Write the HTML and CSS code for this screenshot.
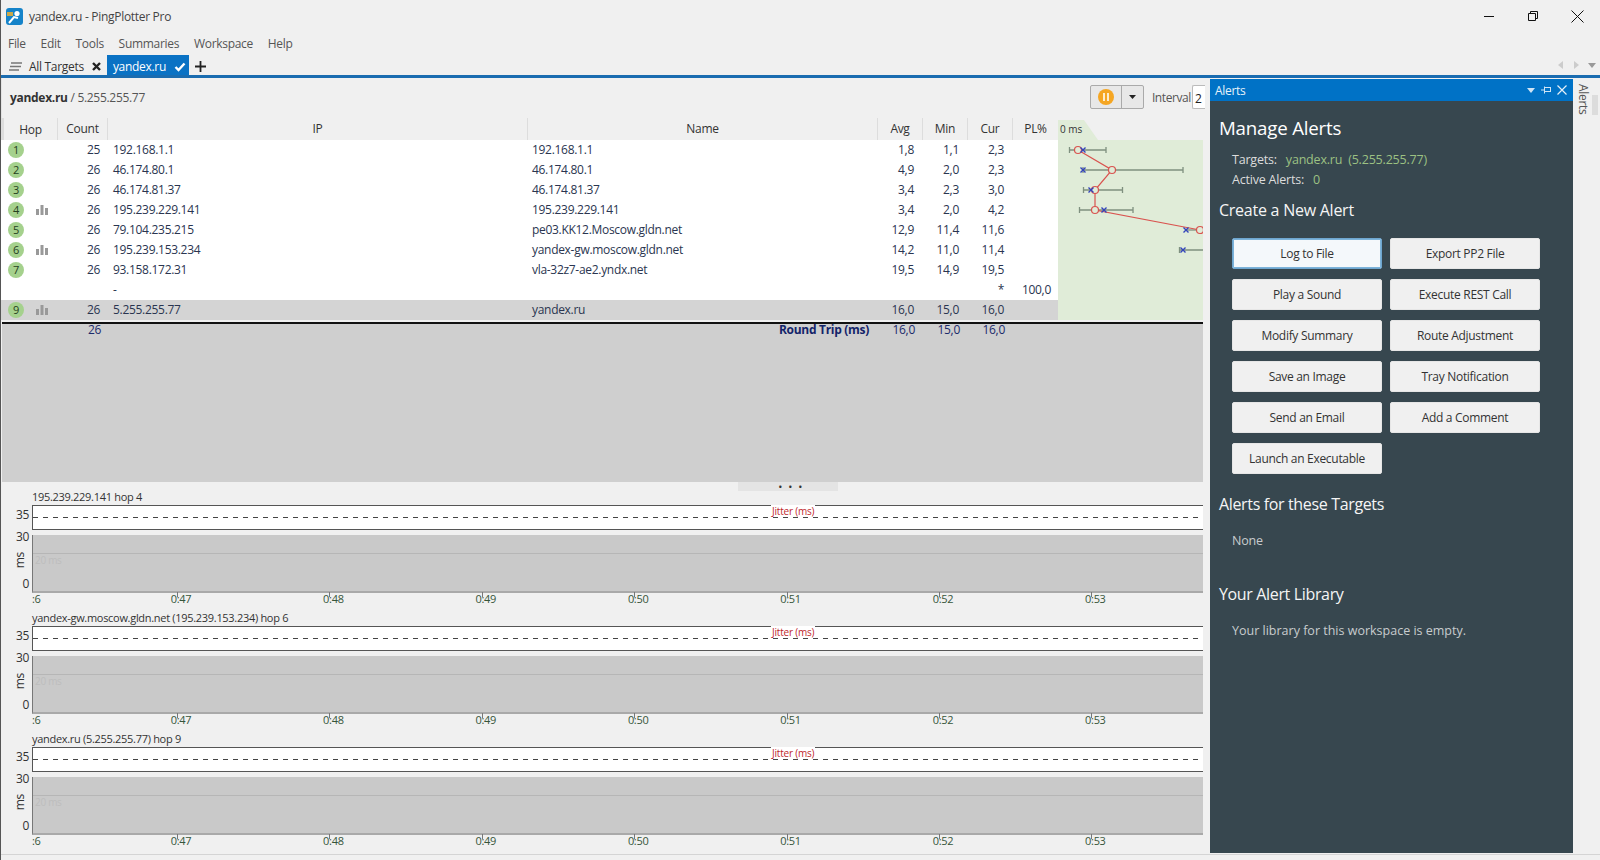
FILE: index.html
```html
<!DOCTYPE html>
<html lang="en">
<head>
<meta charset="utf-8">
<title>yandex.ru - PingPlotter Pro</title>
<link rel="stylesheet" href="styles.css">
</head>
<body>
<div class="app">
  <header class="titlebar">
    <svg class="appicon" width="17" height="17" viewBox="0 0 17 17"><rect width="17" height="17" rx="3" fill="#1583c9"/><rect x="1" y="4" width="6" height="4" fill="#c9a84a"/><circle cx="11" cy="5.5" r="2.6" fill="#fff"/><path d="M3 15 L8 9 L12 10" stroke="#fff" stroke-width="2" fill="none"/></svg>
    <span class="apptitle">yandex.ru - PingPlotter Pro</span>
    <div class="winbtns">
      <svg width="12" height="12" viewBox="0 0 12 12"><path d="M1 6.500H11" stroke="#111" fill="none"/></svg>
      <svg width="12" height="12" viewBox="0 0 12 12"><path d="M1.500 3.500H8.500V10.500H1.500Z M3.500 3.500V1.500H10.500V8.500H8.500" stroke="#111" fill="none"/></svg>
      <svg width="13" height="13" viewBox="0 0 13 13"><path d="M.5 .5L12.500 12.500M12.500 .5L.5 12.500" stroke="#111" fill="none"/></svg>
    </div>
  </header>
  <nav class="menubar"><span>File</span><span>Edit</span><span>Tools</span><span>Summaries</span><span>Workspace</span><span>Help</span></nav>
  <div class="tabbar">
    <svg class="burger" width="13" height="9" viewBox="0 0 13 9"><path d="M2 1H13M1 4.500H12M0 8H10" stroke="#777" stroke-width="1.500" fill="none"/></svg>
    <span class="tab">All Targets</span>
    <svg class="tabx" width="9" height="9" viewBox="0 0 9 9"><path d="M1 1L8 8M8 1L1 8" stroke="#222" stroke-width="2.400" fill="none"/></svg>
    <span class="tab active">yandex.ru
      <svg width="12" height="10" viewBox="0 0 12 10"><path d="M1.500 5L4.500 8L10.500 1.500" stroke="#fff" stroke-width="2.400" fill="none"/></svg>
    </span>
    <svg class="plus" width="11" height="11" viewBox="0 0 11 11"><path d="M5.500 0V11M0 5.500H11" stroke="#222" stroke-width="1.800" fill="none"/></svg>
    <div class="tabnav">
      <svg width="6" height="8" viewBox="0 0 6 8"><path d="M5 0V8L0 4Z" fill="#ccc"/></svg>
      <svg width="6" height="8" viewBox="0 0 6 8"><path d="M1 0V8L6 4Z" fill="#ccc"/></svg>
      <svg width="8" height="5" viewBox="0 0 8 5"><path d="M0 0H8L4 5Z" fill="#999"/></svg>
    </div>
  </div>
  <main class="main">
    <section class="left">
      <div class="toolbar">
        <div class="crumb"><b>yandex.ru</b> / 5.255.255.77</div>
        <div class="pausegroup">
          <span class="pausebtn"><svg width="16" height="16" viewBox="0 0 16 16"><circle cx="8" cy="8" r="8" fill="#f5a623"/><rect x="5" y="4" width="2" height="8" fill="#fdeccd"/><rect x="9" y="4" width="2" height="8" fill="#fdeccd"/></svg></span>
          <span class="dropbtn"><svg width="7" height="4" viewBox="0 0 7 4"><path d="M0 0H7L3.500 4Z" fill="#222"/></svg></span>
        </div>
        <span class="intlabel">Interval</span>
        <span class="intbox">2</span>
      </div>
      <div class="table">
        <div class="tablecols">
          <div class="row head"><span class="c-hop">Hop</span><span class="c-count">Count</span><span class="c-ip">IP</span><span class="c-name">Name</span><span class="c-n">Avg</span><span class="c-n">Min</span><span class="c-n">Cur</span><span class="c-n last">PL%</span></div>
          <div class="row"><span class="c-hop"><i class="hopn">1</i></span><span class="c-count">25</span><span class="c-ip">192.168.1.1</span><span class="c-name">192.168.1.1</span><span class="c-n">1,8</span><span class="c-n">1,1</span><span class="c-n">2,3</span><span class="c-n last"></span></div>
          <div class="row"><span class="c-hop"><i class="hopn">2</i></span><span class="c-count">26</span><span class="c-ip">46.174.80.1</span><span class="c-name">46.174.80.1</span><span class="c-n">4,9</span><span class="c-n">2,0</span><span class="c-n">2,3</span><span class="c-n last"></span></div>
          <div class="row"><span class="c-hop"><i class="hopn">3</i></span><span class="c-count">26</span><span class="c-ip">46.174.81.37</span><span class="c-name">46.174.81.37</span><span class="c-n">3,4</span><span class="c-n">2,3</span><span class="c-n">3,0</span><span class="c-n last"></span></div>
          <div class="row"><span class="c-hop"><i class="hopn">4</i><svg class="bars" width="12" height="10" viewBox="0 0 12 10"><path d="M0 4h3v6H0zM4.500 0h3v10h-3zM9 3h3v7H9z" fill="#999"/></svg></span><span class="c-count">26</span><span class="c-ip">195.239.229.141</span><span class="c-name">195.239.229.141</span><span class="c-n">3,4</span><span class="c-n">2,0</span><span class="c-n">4,2</span><span class="c-n last"></span></div>
          <div class="row"><span class="c-hop"><i class="hopn">5</i></span><span class="c-count">26</span><span class="c-ip">79.104.235.215</span><span class="c-name">pe03.KK12.Moscow.gldn.net</span><span class="c-n">12,9</span><span class="c-n">11,4</span><span class="c-n">11,6</span><span class="c-n last"></span></div>
          <div class="row"><span class="c-hop"><i class="hopn">6</i><svg class="bars" width="12" height="10" viewBox="0 0 12 10"><path d="M0 4h3v6H0zM4.500 0h3v10h-3zM9 3h3v7H9z" fill="#999"/></svg></span><span class="c-count">26</span><span class="c-ip">195.239.153.234</span><span class="c-name">yandex-gw.moscow.gldn.net</span><span class="c-n">14,2</span><span class="c-n">11,0</span><span class="c-n">11,4</span><span class="c-n last"></span></div>
          <div class="row"><span class="c-hop"><i class="hopn">7</i></span><span class="c-count">26</span><span class="c-ip">93.158.172.31</span><span class="c-name">vla-32z7-ae2.yndx.net</span><span class="c-n">19,5</span><span class="c-n">14,9</span><span class="c-n">19,5</span><span class="c-n last"></span></div>
          <div class="row"><span class="c-hop"></span><span class="c-count"></span><span class="c-ip">-</span><span class="c-name"></span><span class="c-n"></span><span class="c-n"></span><span class="c-n">*</span><span class="c-n last">100,0</span></div>
          <div class="row sel"><span class="c-hop"><i class="hopn">9</i><svg class="bars" width="12" height="10" viewBox="0 0 12 10"><path d="M0 4h3v6H0zM4.500 0h3v10h-3zM9 3h3v7H9z" fill="#999"/></svg></span><span class="c-count">26</span><span class="c-ip">5.255.255.77</span><span class="c-name">yandex.ru</span><span class="c-n">16,0</span><span class="c-n">15,0</span><span class="c-n">16,0</span><span class="c-n last"></span></div>
        </div>
        <div class="graphcol">
          <svg class="graphtab" width="60" height="22" viewBox="0 0 60 22"><path d="M0 22V2H26L40 22Z" fill="#e0ecd8"/><text x="2" y="15" class="gtxt">0 ms</text></svg>
          <svg class="graph" width="145" height="180" viewBox="1058 140 145 180">
            <rect x="1058" y="140" width="145" height="180" fill="#e0ecd8"/>
            <g stroke="#7f907f" stroke-width="1.300" fill="none">
              <path d="M1069.500 150H1106M1069.500 147V153M1106 147V153"/>
              <path d="M1083 170H1183M1083 167V173M1183 167V173"/>
              <path d="M1083.500 190H1122.500M1083.500 187V193M1122.500 187V193"/>
              <path d="M1079.500 210H1133M1079.500 207V213M1133 207V213"/>
              <path d="M1186 230H1203"/>
              <path d="M1179.500 250H1203M1179.500 247V253"/>
            </g>
            <g stroke="#d9534f" stroke-width="1.200" fill="none">
              <path d="M1078 150L1112 170L1095 190L1095 210L1200 230"/>
            </g>
            <g stroke="#d9534f" stroke-width="1.200" fill="#e0ecd8">
              <circle cx="1078" cy="150" r="3.500"/><circle cx="1112" cy="170" r="3.500"/><circle cx="1095" cy="190" r="3.500"/><circle cx="1095" cy="210" r="3.500"/><circle cx="1200" cy="230" r="3.500"/>
            </g>
            <g stroke="#3344bb" stroke-width="1.400" fill="none">
              <path d="M1080.500 147.500l5 5m0-5l-5 5M1080.500 167.500l5 5m0-5l-5 5M1088.500 187.500l5 5m0-5l-5 5M1101.500 207.500l5 5m0-5l-5 5M1183.500 227.500l5 5m0-5l-5 5M1180.500 247.500l5 5m0-5l-5 5"/>
            </g>
          </svg>
        </div>
      </div>
      <div class="totals">
        <div class="row total"><span class="c-hop"></span><span class="c-count">26</span><span class="c-ip"></span><span class="c-name rt">Round Trip (ms)</span><span class="c-n">16,0</span><span class="c-n">15,0</span><span class="c-n">16,0</span><span class="c-n last"></span></div>
      </div>
      <div class="splitter"><span class="grip">• • •</span></div>
      <div class="charts">
        <article class="chart">
          <div class="clabel">195.239.229.141 hop 4</div>
          <div class="jrow"><span class="ytick">35</span><div class="jbox"><span class="jtxt">Jitter (ms)</span></div></div>
          <div class="prow"><div class="yaxis"><span>30</span><span class="ms">ms</span><span>0</span></div><div class="plot"><span class="msfaint">20 ms</span></div></div>
          <div class="axis"><span class="tick first">:6</span><span class="tick">0:47</span><span class="tick">0:48</span><span class="tick">0:49</span><span class="tick">0:50</span><span class="tick">0:51</span><span class="tick">0:52</span><span class="tick">0:53</span></div>
        </article>
        <article class="chart">
          <div class="clabel">yandex-gw.moscow.gldn.net (195.239.153.234) hop 6</div>
          <div class="jrow"><span class="ytick">35</span><div class="jbox"><span class="jtxt">Jitter (ms)</span></div></div>
          <div class="prow"><div class="yaxis"><span>30</span><span class="ms">ms</span><span>0</span></div><div class="plot"><span class="msfaint">20 ms</span></div></div>
          <div class="axis"><span class="tick first">:6</span><span class="tick">0:47</span><span class="tick">0:48</span><span class="tick">0:49</span><span class="tick">0:50</span><span class="tick">0:51</span><span class="tick">0:52</span><span class="tick">0:53</span></div>
        </article>
        <article class="chart">
          <div class="clabel">yandex.ru (5.255.255.77) hop 9</div>
          <div class="jrow"><span class="ytick">35</span><div class="jbox"><span class="jtxt">Jitter (ms)</span></div></div>
          <div class="prow"><div class="yaxis"><span>30</span><span class="ms">ms</span><span>0</span></div><div class="plot"><span class="msfaint">20 ms</span></div></div>
          <div class="axis"><span class="tick first">:6</span><span class="tick">0:47</span><span class="tick">0:48</span><span class="tick">0:49</span><span class="tick">0:50</span><span class="tick">0:51</span><span class="tick">0:52</span><span class="tick">0:53</span></div>
        </article>
      </div>
    </section>
    <aside class="alerts">
      <div class="alhead"><span>Alerts</span>
        <div class="alicons">
          <svg width="8" height="5" viewBox="0 0 8 5"><path d="M0 0H8L4 5Z" fill="#cfe4f5"/></svg>
          <svg width="10" height="8" viewBox="0 0 10 8"><path d="M0 4H3M3.500 .5V7.500M3.500 1.500H10M3.500 5.500H10M9.500 1.500V5.500" stroke="#cfe4f5" fill="none"/></svg>
          <svg width="10" height="10" viewBox="0 0 10 10"><path d="M.5 .5L9.500 9.500M9.500 .5L.5 9.500" stroke="#e6f0f8" stroke-width="1.200" fill="none"/></svg>
        </div>
      </div>
      <div class="albody">
        <h1>Manage Alerts</h1>
        <div class="meta"><span class="mlabel">Targets:</span><span class="good">yandex.ru</span><span class="good">(5.255.255.77)</span></div>
        <div class="meta m2"><span class="mlabel">Active Alerts:</span><span class="good">0</span></div>
        <h2>Create a New Alert</h2>
        <div class="btns">
          <button class="btn focus">Log to File</button><button class="btn">Export PP2 File</button>
          <button class="btn">Play a Sound</button><button class="btn">Execute REST Call</button>
          <button class="btn">Modify Summary</button><button class="btn">Route Adjustment</button>
          <button class="btn">Save an Image</button><button class="btn">Tray Notification</button>
          <button class="btn">Send an Email</button><button class="btn">Add a Comment</button>
          <button class="btn">Launch an Executable</button>
        </div>
        <h2 class="h-for">Alerts for these Targets</h2>
        <p class="none">None</p>
        <h2 class="h-lib">Your Alert Library</h2>
        <p class="empty">Your library for this workspace is empty.</p>
      </div>
    </aside>
    <div class="rail"><span class="railtxt">Alerts</span></div>
  </main>
</div>
</body>
</html>
```
FILE: styles.css
```css
* { box-sizing: border-box; }
html, body { margin: 0; height: 100%; }
body { font-family: "Open Sans", "Noto Sans", sans-serif; font-size: 12px; letter-spacing: -0.3px; color: #222; background: #f0f0f0; overflow: hidden; }
.app { width: 1600px; height: 860px; display: flex; flex-direction: column; border-left: 1px solid #555; padding-bottom: 5px; background: #f0f0f0; }

.titlebar { height: 32px; display: flex; align-items: center; padding: 0 0 0 5px; flex: none; }
.appicon { margin-right: 6px; }
.apptitle { color: #444; font-size: 12px; }
.winbtns { margin-left: auto; display: flex; align-items: center; gap: 32px; padding-right: 16px; }

.menubar { height: 22px; display: flex; align-items: center; gap: 14.800px; padding-left: 7px; flex: none; color: #555; }

.tabbar { height: 21px; display: flex; align-items: center; flex: none; padding: 1px 0 0 8px; }
.burger { margin: 3px 7px 0 0; }
.tab { color: #333; padding-top: 3px; }
.tabx { margin: 3px 6px 0 8px; }
.tab.active { background: #0a72c4; color: #fff; align-self: stretch; width: 82px; display: flex; align-items: center; justify-content: space-between; padding: 3px 3px 0 6px; }
.plus { margin: 2px 0 0 6px; }
.tabnav { margin-left: auto; display: flex; align-items: center; gap: 9px; padding-right: 4px; }

.main { flex: 1; min-height: 0; display: flex; border-top: 3px solid #1a6cb0; border-bottom: 1px solid #d4d4d4; }

.left { width: 1209px; flex: none; display: flex; flex-direction: column; min-width: 0; }
.toolbar { height: 40px; display: flex; align-items: center; padding: 0 5px 2px 8px; flex: none; border-left: 1px solid #e3e3e3; }
.crumb { flex: 1; color: #555; }
.crumb b { color: #333; font-weight: 700; }
.pausegroup { display: flex; height: 24px; border: 1px solid #aaa; border-radius: 2px; background: #e8e8e8; margin-right: 8px; }
.pausebtn { width: 31px; display: flex; align-items: center; justify-content: center; border-right: 1px solid #aaa; }
.dropbtn { width: 21px; display: flex; align-items: center; justify-content: center; }
.intlabel { color: #555; margin-right: 1px; letter-spacing: -0.4px; }
.intbox { width: 13px; height: 24px; border: 1px solid #bbb; border-right: 0; border-radius: 2px 0 0 2px; background: #fff; padding: 4px 0 0 2px; overflow: hidden; }

.table { display: flex; flex: none; margin-right: 6px; }
.tablecols { width: 1057px; flex: none; }
.row { display: flex; height: 20px; line-height: 20px; background: #fff; color: #2a3550; }
.row > span { display: block; flex: none; height: 100%; }
.c-hop { width: 57px; padding-left: 7px; display: flex !important; align-items: center; }
.c-count { width: 50px; text-align: right; padding-right: 8px; }
.c-ip { width: 420px; padding-left: 5px; }
.c-name { width: 350px; padding-left: 4px; }
.c-n { width: 45px; text-align: right; padding-right: 9px; }
.c-n.last { width: 45px; padding-right: 7px; }

.row.head { height: 22px; line-height: 21px; background: #f0f0f0; color: #333; border-left: 3px solid #ddd; }
.head > span { text-align: center; padding: 0; border-right: 1px solid #ddd; }
.head .c-hop { width: 54px; justify-content: center; }
.head .c-count { width: 50px; }
.head .c-n.last { border-right: 0; padding: 0; }
.row.sel { background: #d4d4d4; }
.hopn { width: 16px; height: 16px; border-radius: 50%; background: #a5d18d; color: #264020; font-style: normal; font-size: 11px; text-align: center; line-height: 16px; display: block; flex: none; }
.bars { margin-left: 12px; }

.graphcol { width: 145px; flex: none; display: flex; flex-direction: column; }
.graphtab { display: block; flex: none; }
.gtxt { font-size: 10px; fill: #333; letter-spacing: 0; }
.graph { display: block; flex: none; }

.totals { flex: 1; min-height: 0; background: #cfcfcf; border-top: 2px solid #111; margin: 2px 7px 0 1px; }
.row.total { background: none; color: #1c2b6b; height: 14px; line-height: 12px; }
.rt { text-align: right; padding-right: 10px; font-weight: 700; color: #14246a; }

.splitter { height: 9px; flex: none; background: #f0f0f0; display: flex; }
.grip { width: 100px; margin-left: 737px; padding-left: 6px; height: 9px; background: #e4e4e4; text-align: center; line-height: 9px; font-size: 11px; letter-spacing: 1.500px; color: #333; }

.charts { flex: none; display: flex; flex-direction: column; margin-right: 7px; }
.chart { height: 121px; display: flex; flex-direction: column; }
.clabel { height: 14px; line-height: 12px; padding-left: 31px; color: #333; font-size: 11px; flex: none; white-space: nowrap; }
.jrow { height: 25px; display: flex; flex: none; align-items: center; }
.ytick { width: 31px; text-align: right; padding: 0 3px 6px 0; color: #333; }
.jbox { flex: 1; height: 25px; position: relative; background: #fff linear-gradient(90deg, #444 0 5px, transparent 5px 10px) 0 11px / 10px 1px repeat-x; background-color: #fff; border: 1px solid #555; border-right: 0; }
.jtxt { position: absolute; left: 738px; top: -1px; font-size: 10px; line-height: 12px; color: #c0272d; background: #fff; padding: 0 1px; white-space: nowrap; letter-spacing: -0.2px; }
.prow { height: 58px; margin-top: 5px; display: flex; flex: none; }
.yaxis { width: 31px; flex: none; display: flex; flex-direction: column; justify-content: space-between; align-items: flex-end; padding-right: 3px; color: #333; height: 59px; line-height: 12px; margin-top: -4px; }
.yaxis .ms { writing-mode: vertical-rl; transform: rotate(180deg); margin-right: 3px; line-height: 12px; }
.plot { flex: 1; position: relative; background: #c9c9c9; border-bottom: 2px solid #a9a9a9; border-left: 1px solid #777; }
.plot::before { content: ""; display: block; height: 1px; background: #b6b6b6; margin-top: 18px; }
.msfaint { position: absolute; left: 2px; top: 18px; font-size: 10px; line-height: 14px; color: #bdbdbd; }
.axis { height: 13px; margin-top: -1px; display: flex; padding-left: 31px; flex: none; color: #36553a; font-size: 11px; line-height: 13px; }
.tick { width: 152.400px; flex: none; text-align: center; position: relative; }
.tick.first { width: 72.800px; text-align: left; }
.tick:not(.first)::before { content: ""; position: absolute; left: calc(50% - 4px); top: 0; width: 1px; height: 5px; background: #777; }

.alerts { width: 363px; flex: none; display: flex; flex-direction: column; background: #37474f; color: #e6e6e6; margin: 1px 0; }
.alhead { height: 22px; flex: none; background: #0072c6; color: #e8f2fa; display: flex; align-items: center; padding: 0 5px; }
.alicons { margin-left: auto; display: flex; align-items: center; gap: 6px; padding-right: 1px; }
.albody { flex: 1; padding: 14px 0 0 9px; letter-spacing: -0.2px; }
h1 { font-size: 18.700px; font-weight: 400; margin: 0; color: #fff; line-height: 26px; }
h2 { font-size: 16px; font-weight: 400; margin: 0; color: #f5f5f5; line-height: 22px; letter-spacing: -0.25px; }
.meta { display: flex; gap: 8px; padding-left: 13px; font-size: 12.500px; line-height: 20px; }
.mlabel { color: #dcdcdc; }
.meta .mlabel + .good { margin-left: 1px; }
.meta .good { margin-right: -2px; }
.good { color: #9cc183; }
h1 + .meta { margin-top: 9px; }
.m2 { margin-bottom: 9px; }
.btns { display: grid; grid-template-columns: 150px 150px; column-gap: 8px; row-gap: 10px; padding: 17px 0 0 13px; }
.btn { height: 31px; border: 1px solid #e6e6e6; border-radius: 2px; background: #f0f0f0; color: #333; font: inherit; letter-spacing: -0.3px; padding: 0; }
.btn.focus { background: #f4f8fb; border-color: #6ea6cf; box-shadow: inset 0 0 0 1px #7cb3da; }
.h-for { margin-top: 19px; letter-spacing: -0.35px; }
.none, .empty { margin: 0; padding-left: 13px; color: #c8ccce; font-size: 12.500px; line-height: 18px; }
.none { margin-top: 17px; }
.h-lib { margin-top: 33px; letter-spacing: -0.35px; }
.empty { margin-top: 17px; letter-spacing: 0; }

.rail { flex: 1; background: #f0f0f0; display: flex; justify-content: center; position: relative; }
.railtxt { writing-mode: vertical-rl; color: #555; font-size: 12px; padding-top: 6px; margin-right: 6px; height: 44px; }
.rail::after { content: ""; position: absolute; right: 2px; top: 17px; width: 6px; height: 20px; background: #dcdcdc; }
```
